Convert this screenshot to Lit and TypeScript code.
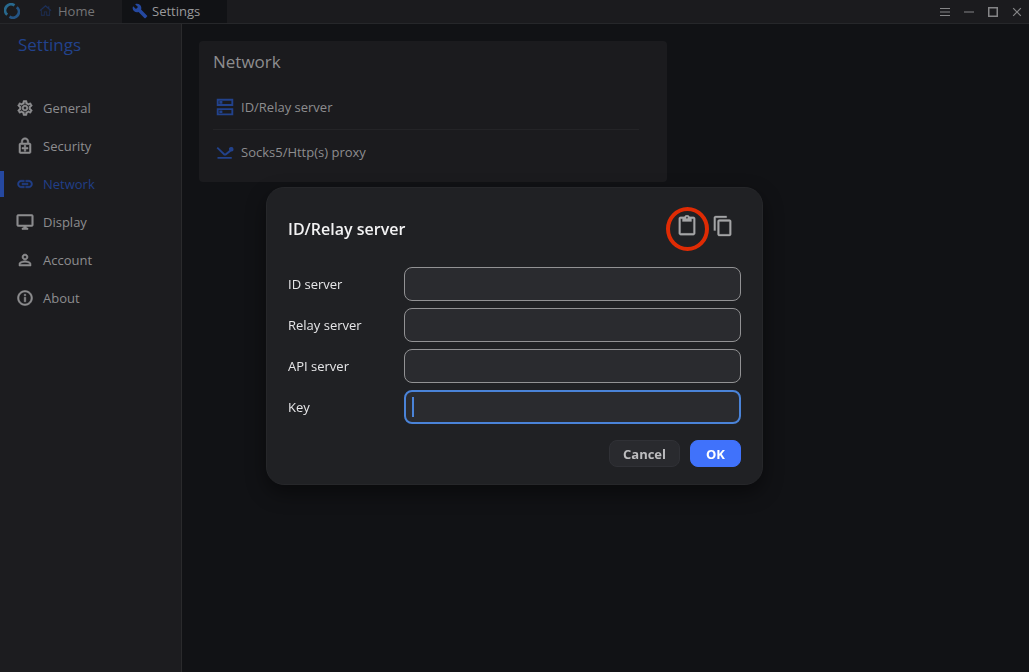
import { LitElement, html, css, svg } from "lit";
import { customElement, property, state } from "lit/decorators.js";
import { classMap } from "lit/directives/class-map.js";

const ICONS: Record<string, string> = {
  gear: "M19.43 12.98c.04-.32.07-.64.07-.98 0-.34-.03-.66-.07-.98l2.11-1.65c.19-.15.24-.42.12-.64l-2-3.46c-.09-.16-.26-.25-.44-.25-.06 0-.12.01-.17.03l-2.49 1c-.52-.4-1.08-.73-1.69-.98l-.38-2.65C14.46 2.18 14.25 2 14 2h-4c-.25 0-.46.18-.49.42l-.38 2.65c-.61.25-1.17.59-1.69.98l-2.49-1c-.06-.02-.12-.03-.18-.03-.17 0-.34.09-.43.25l-2 3.46c-.13.22-.07.49.12.64l2.11 1.65c-.04.32-.07.65-.07.98 0 .33.03.66.07.98l-2.11 1.65c-.19.15-.24.42-.12.64l2 3.46c.09.16.26.25.44.25.06 0 .12-.01.17-.03l2.49-1c.52.4 1.08.73 1.69.98l.38 2.65c.03.24.24.42.49.42h4c.25 0 .46-.18.49-.42l.38-2.65c.61-.25 1.17-.59 1.69-.98l2.49 1c.06.02.12.03.18.03.17 0 .34-.09.43-.25l2-3.46c.12-.22.07-.49-.12-.64l-2.11-1.65zm-1.98-1.71c.04.31.05.52.05.73 0 .21-.02.43-.05.73l-.14 1.13.89.7 1.08.84-.7 1.21-1.27-.51-1.04-.42-.9.68c-.43.32-.84.56-1.25.73l-1.06.43-.16 1.13-.2 1.35h-1.4l-.19-1.35-.16-1.13-1.06-.43c-.43-.18-.83-.41-1.23-.71l-.91-.7-1.06.43-1.27.51-.7-1.21 1.08-.84.89-.7-.14-1.13c-.03-.31-.05-.54-.05-.74s.02-.43.05-.73l.14-1.13-.89-.7-1.08-.84.7-1.21 1.27.51 1.04.42.9-.68c.43-.32.84-.56 1.25-.73l1.06-.43.16-1.13.2-1.35h1.39l.19 1.35.16 1.13 1.06.43c.43.18.83.41 1.23.71l.91.7 1.06-.43 1.27-.51.7 1.21-1.07.85-.89.7.14 1.13zM12 8c-2.21 0-4 1.79-4 4s1.79 4 4 4 4-1.79 4-4-1.79-4-4-4zm0 6c-1.1 0-2-.9-2-2s.9-2 2-2 2 .9 2 2-.9 2-2 2z",
  lock: "M18 8h-1V6c0-2.76-2.24-5-5-5S7 3.24 7 6v2H6c-1.1 0-2 .9-2 2v10c0 1.1.9 2 2 2h12c1.1 0 2-.9 2-2V10c0-1.1-.9-2-2-2zM9 6c0-1.66 1.34-3 3-3s3 1.34 3 3v2H9V6zm9 14H6V10h12v10zm-7-1h2v-3h3v-2h-3v-3h-2v3H8v2h3z",
  link: "M3.9 12c0-1.71 1.39-3.1 3.1-3.1h4V7H7c-2.76 0-5 2.24-5 5s2.24 5 5 5h4v-1.9H7c-1.71 0-3.1-1.39-3.1-3.1zM8 13h8v-2H8v2zm9-6h-4v1.9h4c1.71 0 3.1 1.39 3.1 3.1s-1.39 3.1-3.1 3.1h-4V17h4c2.76 0 5-2.24 5-5s-2.24-5-5-5z",
  display: "M21 2H3c-1.1 0-2 .9-2 2v12c0 1.1.9 2 2 2h7v2H8v2h8v-2h-2v-2h7c1.1 0 2-.9 2-2V4c0-1.1-.9-2-2-2zm0 14H3V4h18v12z",
  person: "M12 5.9a2.1 2.1 0 110 4.2 2.1 2.1 0 010-4.2m0 9c2.97 0 6.1 1.46 6.1 2.1v1.1H5.9V17c0-.64 3.13-2.1 6.1-2.1M12 4C9.79 4 8 5.79 8 8s1.79 4 4 4 4-1.79 4-4-1.79-4-4-4zm0 9c-2.67 0-8 1.34-8 4v3h16v-3c0-2.66-5.33-4-8-4z",
  info: "M11 7h2v2h-2zm0 4h2v6h-2zm1-9C6.48 2 2 6.48 2 12s4.48 10 10 10 10-4.48 10-10S17.52 2 12 2zm0 18c-4.41 0-8-3.59-8-8s3.59-8 8-8 8 3.59 8 8-3.59 8-8 8z",
  wrench: "M22.7 19l-9.1-9.1c.9-2.3.4-5-1.5-6.9-2-2-5-2.4-7.4-1.3L9 6 6 9 1.6 4.7C.4 7.1.9 10.1 2.9 12.1c1.9 1.9 4.6 2.4 6.9 1.5l9.1 9.1c.4.4 1 .4 1.4 0l2.3-2.3c.5-.4.5-1.1.1-1.4z",
  home: "M12 5.2L5 11v9h4v-6h6v6h4v-9zM12 2L1 11.5l1.2 1.4L3.5 12v9.5h7V15h3v6.5h7V12l1.3.9 1.2-1.4L19 8V4h-2v2.2z",
  server: "M1 1h22v9.500H1zm2.500 2.500v4.500h17V3.500zM1 13.500h22V23H1zm2.500 2.500v4.500h17V16zM4.500 4h4v3.500h-4zM4.500 16.500h4V20h-4z",
  proxy: "M2 18.500h19v2.500H2zM10.600 16.800L.8 7l1.700-1.700 9.500 9.100 5.700-4.800A3 3 0 1120 11.300l-6.700 5.500z",
  paste: "M19 2h-4.180C14.400.84 13.300 0 12 0S9.600.84 9.180 2H5c-1.100 0-2 .9-2 2v16c0 1.100.9 2 2 2h14c1.100 0 2-.9 2-2V4c0-1.100-.9-2-2-2zm-7 0c.55 0 1 .45 1 1s-.45 1-1 1-1-.45-1-1 .45-1 1-1zm7 18H5V4h2v3h10V4h2v16z",
  copy: "M16 1H4c-1.100 0-2 .9-2 2v14h2V3h12V1zm3 4H8c-1.100 0-2 .9-2 2v14c0 1.100.9 2 2 2h11c1.100 0 2-.9 2-2V7c0-1.100-.9-2-2-2zm0 16H8V7h11v14z",
  menu: "M2 4h20v2H2zM2 11h20v2H2zM2 18h20v2H2z",
  minimize: "M2 11h20v2H2z",
  maximize: "M2 2h20v20H2zm3 3v14h14V5z",
  close: "M5.200 3.500L12 10.300l6.800-6.800 1.700 1.700L13.700 12l6.800 6.800-1.700 1.700L12 13.700l-6.800 6.800-1.700-1.700L10.300 12 3.500 5.200z",
};

@customElement("ui-icon")
class UiIcon extends LitElement {
  @property() name = "gear";

  static styles = css`
    :host { display: block; flex: none; width: 18px; height: 18px; stroke-width: 0; }
    .glyph { display: block; width: 100%; height: 100%; fill: currentColor; stroke: currentColor; }
  `;

  render() {
    return html`<svg class="glyph" viewBox="0 0 24 24" aria-hidden="true">
      ${svg`<path fill-rule="evenodd" d=${ICONS[this.name]} />`}
    </svg>`;
  }
}

@customElement("server-dialog")
class ServerDialog extends LitElement {
  static styles = css`
    :host { display: block; width: min(497px, 92vw); }
    .dialog {
      box-sizing: border-box;
      padding: 17px 21px;
      border: 1px solid #26272a;
      border-radius: 18px;
      background: #202124;
      color: #e6e6e8;
      box-shadow: 0 8px 20px rgba(0, 0, 0, 0.45);
    }
    .head { display: flex; align-items: center; gap: 12px; height: 48px; margin-bottom: 14px; padding-right: 6px; }
    .title { flex: 1; margin: 0; font-size: 16px; font-weight: 600; line-height: 24px; color: #f2f2f3; }
    .tool {
      display: grid; place-items: start center; padding: 0; border: 0;
      width: 24px; height: 28px; background: none; color: #a5a6a8; position: relative;
    }
    .tool ui-icon { width: 22px; height: 22px; stroke-width: 0.3px; }
    .marked::after {
      content: ""; position: absolute; inset: -8px -10px -8px -9px;
      border: 4px solid #df2b04; border-radius: 50%;
    }
    .fields { display: grid; grid-template-columns: 104px 1fr; gap: 7px 12px; align-items: center; }
    .label { font-size: 13px; line-height: 20px; }
    .field {
      box-sizing: border-box; width: 100%; height: 34px; padding: 0 8px;
      border: 1px solid #929294; border-radius: 8px; outline: none;
      background: #2a2b2f; color: #e6e6e8; font: inherit; font-size: 13px;
    }
    .active {
      border: 2px solid #4a83d8;
      background: linear-gradient(#4a83d8, #4a83d8) 6px center / 2px 20px no-repeat #2a2b2f;
    }
    .actions { display: flex; justify-content: flex-end; gap: 10px; margin-top: 16px; }
    .btn {
      box-sizing: border-box; height: 27px; padding: 0 13px; border: 1px solid #303136;
      border-radius: 8px; background: #292a2e; color: #bdbdbf;
      font: inherit; font-size: 13px; font-weight: 700; line-height: 20px;
    }
    .primary { padding: 0 15px; background: #4072fb; border-color: #4072fb; color: #ffffff; }
  `;

  private fields = [
    { id: "id-server", label: "ID server" },
    { id: "relay-server", label: "Relay server" },
    { id: "api-server", label: "API server" },
    { id: "key", label: "Key" },
  ];

  @state() private active = "key";

  render() {
    return html`
      <section class="dialog" role="dialog" aria-labelledby="title">
        <header class="head">
          <h2 class="title" id="title">ID/Relay server</h2>
          <button class="tool marked" aria-label="Paste"><ui-icon name="paste"></ui-icon></button>
          <button class="tool" aria-label="Copy"><ui-icon name="copy"></ui-icon></button>
        </header>
        <div class="fields">
          ${this.fields.map(
            (f) => html`
              <label class="label" for=${f.id}>${f.label}</label>
              <input
                id=${f.id}
                type="text"
                class=${classMap({ field: true, active: this.active === f.id })}
                @focus=${() => (this.active = f.id)}
              />
            `
          )}
        </div>
        <footer class="actions">
          <button class="btn">Cancel</button>
          <button class="btn primary">OK</button>
        </footer>
      </section>
    `;
  }
}

@customElement("app-root")
class AppRoot extends LitElement {
  static styles = css`
    :host {
      display: grid; grid-template-rows: 24px 1fr; min-height: 100vh;
      background: #111215; color: #8d8d8f;
      font-family: "Open Sans", "Noto Sans", sans-serif; font-size: 13px; line-height: 20px;
    }
    .topbar { display: flex; background: #1b1b1e; border-bottom: 1px solid #26272a; }
    .logo { width: 16px; height: 16px; margin: 3px 4px; flex: none; }
    .tab { display: flex; align-items: center; padding-bottom: 2px; color: #747476; text-decoration: none; }
    .tab ui-icon { width: 13px; height: 13px; color: #1c2f57; }
    .home { box-sizing: border-box; width: 98px; padding-left: 15px; gap: 6px; }
    .settings { box-sizing: border-box; width: 105px; padding-left: 10px; gap: 4px; background: #111215; color: #9a9a9c; }
    .settings ui-icon { width: 16px; height: 16px; color: #2548a0; }
    .controls { display: flex; align-items: center; gap: 12px; margin-left: auto; padding-right: 6px; }
    .control { padding: 0; border: 0; background: none; color: #858587; }
    .control ui-icon { width: 12px; height: 12px; }
    .body { display: grid; grid-template-columns: 182px 1fr; }
    .side { box-sizing: border-box; background: #1c1c1f; border-right: 1px solid #2a2a2c; }
    .side-title { margin: 0; padding: 8px 18px 32px; font-size: 17px; line-height: 26px; font-weight: 400; color: #22428c; }
    .item {
      display: flex; align-items: center; gap: 9px; height: 26px; margin-bottom: 12px;
      padding-left: 12px; border-left: 4px solid transparent;
      color: inherit; text-decoration: none;
    }
    .item ui-icon { stroke-width: 0.7px; }
    .current { color: #213f88; border-left-color: #2548a0; }
    .nav { padding-top: 5px; }
    .main { padding: 17px; }
    .card { box-sizing: border-box; width: min(100%, 468px); padding: 8px 28px 9px 14px; background: #1b1b1e; border-radius: 4px; }
    .card-title { margin: 0 0 10px; font-size: 17px; line-height: 26px; font-weight: 400; }
    .row {
      display: flex; align-items: center; gap: 7px; box-sizing: border-box; width: 100%; height: 44px;
      padding: 0 3px; border: 0; background: none; color: inherit; font: inherit; text-align: left;
    }
    .row ui-icon { color: #22428c; }
    .row + .row { border-top: 1px solid #242427; }
    .overlay { position: fixed; inset: 0; display: grid; place-items: center; }
  `;

  @state() private page = "Network";

  private nav = [
    ["gear", "General"],
    ["lock", "Security"],
    ["link", "Network"],
    ["display", "Display"],
    ["person", "Account"],
    ["info", "About"],
  ];

  render() {
    return html`
      <header class="topbar">
        <svg class="logo" viewBox="0 0 16 16" aria-hidden="true">
          <g fill="none" stroke-width="2.8">
            <path d="M10.500 2.300A6 6 0 003.200 11.800" stroke="#28698e" />
            <path d="M5.500 13.700A6 6 0 0012.800 4.200" stroke="#245484" />
          </g>
        </svg>
        <a class="tab home" href="#home"><ui-icon name="home"></ui-icon>Home</a>
        <a class="tab settings" href="#settings"><ui-icon name="wrench"></ui-icon>Settings</a>
        <div class="controls">
          ${["menu", "minimize", "maximize", "close"].map(
            (n) => html`<button class="control" aria-label=${n}><ui-icon name=${n}></ui-icon></button>`
          )}
        </div>
      </header>
      <div class="body">
        <aside class="side">
          <h1 class="side-title">Settings</h1>
          <nav class="nav">
            ${this.nav.map(
              ([icon, label]) => html`
                <a
                  class=${classMap({ item: true, current: this.page === label })}
                  href="#${label.toLowerCase()}"
                  @click=${() => (this.page = label)}
                  ><ui-icon name=${icon}></ui-icon>${label}</a
                >
              `
            )}
          </nav>
        </aside>
        <main class="main">
          <section class="card">
            <h2 class="card-title">Network</h2>
            <button class="row"><ui-icon name="server"></ui-icon>ID/Relay server</button>
            <button class="row"><ui-icon name="proxy"></ui-icon>Socks5/Http(s) proxy</button>
          </section>
        </main>
      </div>
      <div class="overlay"><server-dialog></server-dialog></div>
    `;
  }
}
